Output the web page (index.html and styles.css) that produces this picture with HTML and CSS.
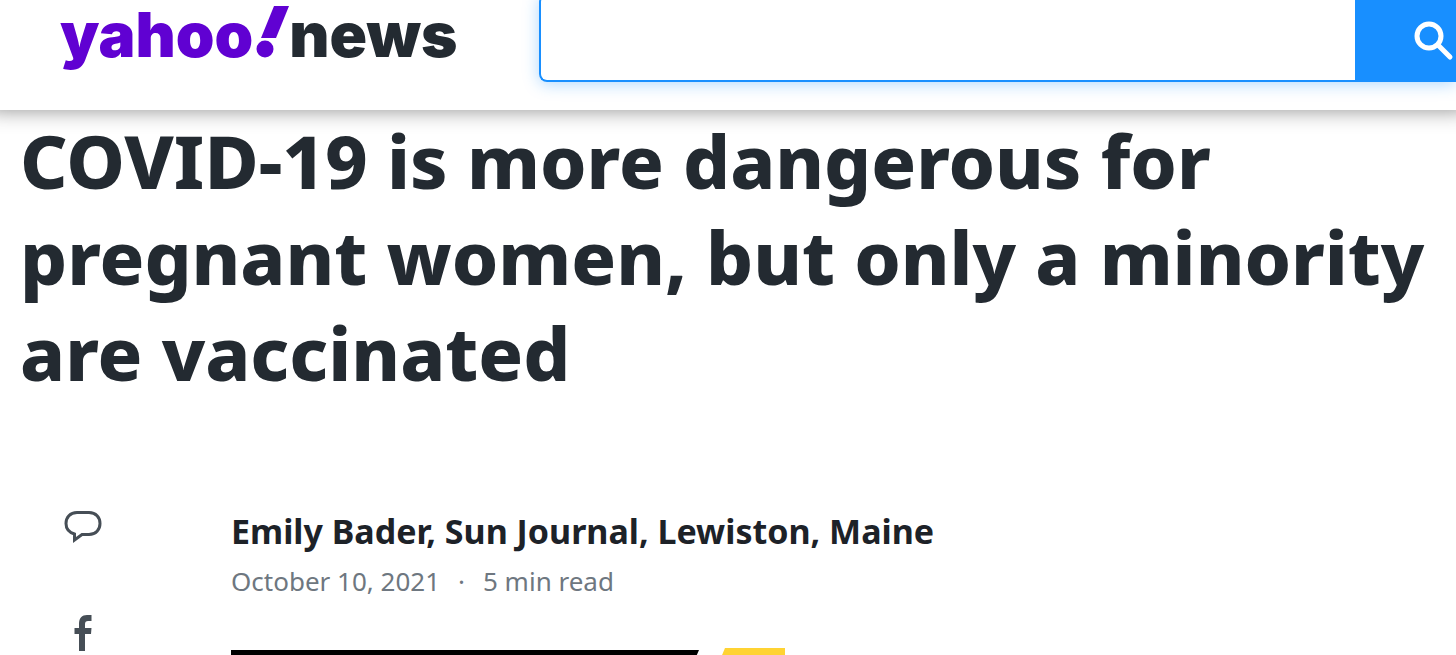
FILE: index.html
```html
<!DOCTYPE html>
<html lang="en">
<head>
    <meta charset="UTF-8">
    <meta name="viewport" content="width=device-width, initial-scale=1.0">
    <title>COVID-19 is more dangerous for pregnant women - Yahoo News</title>
    <link rel="stylesheet" href="styles.css">
</head>
<body>
    <header class="site-header">
        <a class="logo" href="#"><span class="logo-yahoo">yahoo</span><svg class="logo-bang" viewBox="0 0 36 52" aria-hidden="true">
            <path d="M21 0H36L23 32H8Z"/>
            <circle cx="12" cy="43" r="8.5"/>
        </svg><span class="logo-news">news</span></a>
        <form class="search">
            <input class="search-input" type="text" aria-label="Search">
            <button class="search-button" type="submit" aria-label="Search">
                <svg class="search-icon" viewBox="0 0 40 40">
                    <circle cx="15" cy="15" r="12"/>
                    <path d="M24 24L36 36"/>
                </svg>
            </button>
        </form>
    </header>

    <main class="article">
        <h1 class="headline">COVID-19 is more dangerous for pregnant women, but only a minority are vaccinated</h1>

        <div class="article-row">
            <nav class="share">
                <a class="share-link" href="#" aria-label="Comments">
                    <svg class="icon-comment" viewBox="0 0 38 32">
                        <path d="M13 1.500H25C32 1.500 36 6.500 36 12.500S32 23.500 25 23.500H18L10.500 29V23C5.500 21.500 2 18 2 12.500C2 6.500 6 1.500 13 1.500Z"/>
                    </svg>
                </a>
                <a class="share-link" href="#" aria-label="Share on Facebook">
                    <svg class="icon-facebook" viewBox="0 0 18 36">
                        <path d="M5 36V19H0.500V13H5V9C5 3 8 0 13 0H17.500V6H14C12 6 11 7 11 9V13H17.500L17 19H11V36Z"/>
                    </svg>
                </a>
            </nav>

            <div class="story">
                <div class="author">Emily Bader, Sun Journal, Lewiston, Maine</div>
                <div class="meta">
                    <time datetime="2021-10-10">October 10, 2021</time>
                    <span>·</span>
                    <span>5 min read</span>
                </div>
                <svg class="publisher" viewBox="0 0 556 48" aria-hidden="true">
                    <path d="M0 2H468L448 48H0Z"/>
                    <path class="publisher-accent" d="M494 0H554V48H474Z"/>
                </svg>
            </div>
        </div>
    </main>
</body>
</html>
```

FILE: styles.css
```css
body {
    font-family: "Noto Sans", sans-serif;
    margin: 0;
    height: 100vh;
    overflow: hidden;
    background-color: #fff;
    color: #232a31;
}

.site-header {
    position: relative;
    z-index: 1;
    display: flex;
    align-items: flex-start;
    height: 110px;
    padding-left: 60px;
    background-color: #fff;
    box-shadow: 0 -12px 20px 12px rgba(0, 0, 0, 0.45);
}

.logo {
    display: flex;
    align-items: flex-start;
    width: 479px;
    flex-shrink: 0;
    font-family: Inter, sans-serif;
    font-size: 62px;
    font-weight: 900;
    line-height: 70px;
    text-decoration: none;
}

.logo-yahoo {
    color: #6001d2;
}

.logo-bang {
    width: 36px;
    height: 52px;
    margin-top: 6px;
    fill: #6001d2;
}

.logo-news {
    color: #232a31;
}

.search {
    display: flex;
    flex: 1;
    height: 88px;
    margin-top: -6px;
    border-radius: 8px 0 0 8px;
    box-shadow: 0 2px 16px rgba(24, 143, 255, 0.35);
}

.search-input {
    flex: 1;
    min-width: 0;
    box-sizing: border-box;
    padding: 0 20px;
    border: 2px solid #188fff;
    border-right: none;
    border-radius: 8px 0 0 8px;
    background-color: #fff;
    font-size: 32px;
    outline: none;
}

.search-button {
    display: flex;
    align-items: center;
    justify-content: flex-end;
    width: 101px;
    padding: 6px 2px 0 0;
    border: none;
    background-color: #188fff;
    cursor: pointer;
}

.search-icon {
    width: 40px;
    height: 40px;
    fill: none;
    stroke: #fff;
    stroke-width: 5;
    stroke-linecap: round;
}

.article {
    padding: 3px 20px 0;
}

.headline {
    margin: 0;
    font-size: 74px;
    font-weight: 800;
    line-height: 96px;
}

.article-row {
    display: flex;
    margin-top: 104px;
}

.share {
    display: flex;
    flex-direction: column;
    align-items: center;
    gap: 72px;
    width: 126px;
    margin-right: 85px;
    padding-top: 6px;
}

.share-link {
    display: flex;
}

.icon-comment {
    width: 38px;
    height: 32px;
    fill: none;
    stroke: #464e56;
    stroke-width: 3;
}

.icon-facebook {
    width: 18px;
    height: 36px;
    fill: #464e56;
}

.story {
    flex: 1;
}

.author {
    color: #1d2228;
    font-size: 34px;
    font-weight: 700;
    line-height: 52px;
}

.meta {
    display: flex;
    gap: 18px;
    margin-top: 4px;
    color: #6e7780;
    font-size: 26px;
    line-height: 40px;
}

.publisher {
    display: block;
    width: 556px;
    height: 48px;
    margin-top: 47px;
}

.publisher-accent {
    fill: #ffd333;
}
```
